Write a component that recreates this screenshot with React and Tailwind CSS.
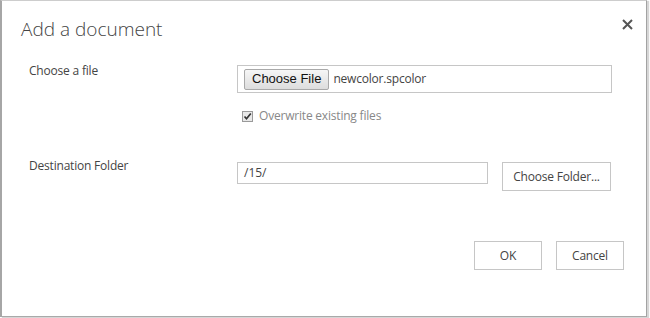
import React from "react";

export default function App() {
  return (
    <div className="w-[650px] h-[318px] bg-white" style={{ fontFamily: '"Open Sans", "Noto Sans", sans-serif' }}>
      <div className="relative w-[647px] h-[317px] bg-white border-t border-t-[#cdcdcd] border-l-2 border-l-[#a6a6a6] border-r border-r-[#a3a3a3] border-b border-b-[#a9a9a9] shadow-[2px_1px_1px_#d6d6d6]">
        <h1 className="pl-[19px] pt-[14px] text-[19px] leading-[28px] font-light text-[#444]">Add a document</h1>
        <button className="absolute top-[16px] right-[12px] w-[14px] h-[14px] flex items-center justify-center">
          <svg width="11" height="11" viewBox="0 0 11 11">
            <path d="M1 1 L10 10 M10 1 L1 10" stroke="#555" strokeWidth="2" />
          </svg>
        </button>

        <div className="flex mt-[22px]">
          <div className="w-[235px] pl-[27px] -mt-[3px] text-[12px] leading-[18px] tracking-[-0.2px] text-[#444]">Choose a file</div>
          <div className="flex flex-col">
            <div className="w-[375px] h-[28px] border border-[#c6c6c6] flex items-center pl-[6px]">
              <div className="h-[21px] px-[7px] flex items-center rounded-[2px] border border-[#a9a9a9] bg-gradient-to-b from-[#f6f6f6] to-[#dddddd] text-[13px] text-[#111]" style={{ fontFamily: '"Liberation Sans", Arial, sans-serif' }}>Choose File</div>
              <span className="ml-[4px] text-[12px] tracking-[-0.2px] text-[#444]">newcolor.spcolor</span>
            </div>
            <label className="flex items-center mt-[15px] ml-[5px] text-[12px] leading-[16px] tracking-[-0.2px] text-[#888]">
              <span className="w-[11px] h-[11px] border border-[#9a9a9a] bg-[#e8e8e8] flex items-center justify-center">
                <svg width="9" height="9" viewBox="0 0 9 9">
                  <path d="M1.5 4.5 L3.5 6.8 L7.8 1.5" stroke="#333" strokeWidth="1.7" fill="none" />
                </svg>
              </span>
              <span className="ml-[6px]">Overwrite existing files</span>
            </label>
          </div>
        </div>

        <div className="flex mt-[38px]">
          <div className="w-[235px] pl-[27px] -mt-[5px] text-[12px] leading-[18px] tracking-[-0.2px] text-[#444]">Destination Folder</div>
          <div className="w-[251px] h-[22px] border border-[#c6c6c6] flex items-center pl-[6px] text-[12px] text-[#444]">/15/</div>
          <button className="ml-[14px] w-[109px] h-[29px] border border-[#c6c6c6] bg-white text-[12px] tracking-[-0.2px] text-[#444]">Choose Folder...</button>
        </div>

        <div className="flex justify-end gap-[14px] mt-[50px] pr-[22px]">
          <button className="w-[68px] h-[29px] border border-[#c6c6c6] bg-white text-[12px] text-[#444]">OK</button>
          <button className="w-[68px] h-[29px] border border-[#c6c6c6] bg-white text-[12px] tracking-[-0.2px] text-[#444]">Cancel</button>
        </div>
      </div>
    </div>
  );
}
